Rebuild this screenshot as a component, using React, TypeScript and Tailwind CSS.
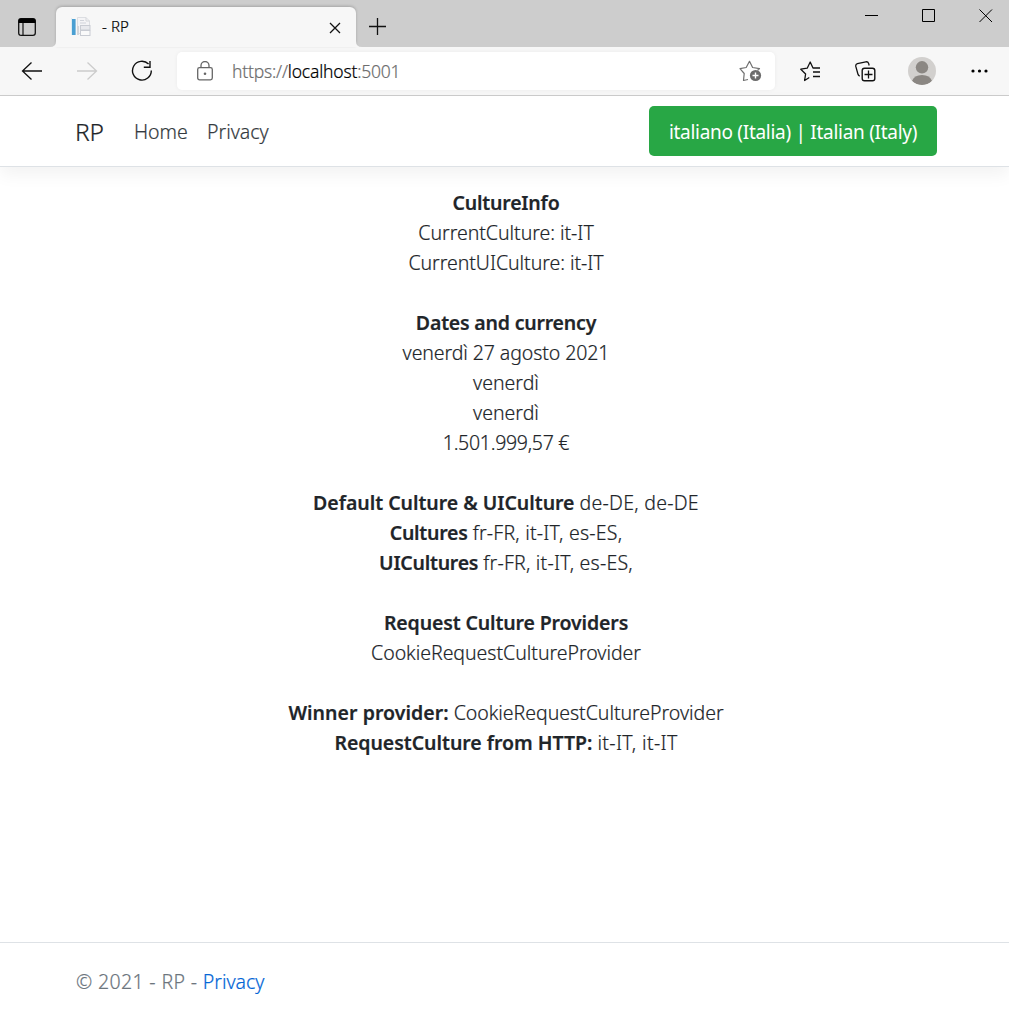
import type { ReactNode } from "react";

function TabStrip() {
  return (
    <div className="flex h-[47px] bg-[#cdcdcd]">
      <div className="flex w-[56px] items-center pt-[7px] pl-[18px]">
        <svg width="18" height="18" viewBox="0 0 18 18" fill="none">
          <rect x="0.7" y="0.7" width="16.6" height="16.6" rx="2.4" stroke="#111" strokeWidth="1.3" />
          <path d="M0.5 5V3Q0.5 0.5 3 0.5H15Q17.5 0.5 17.5 3V5Z" fill="#000" />
          <path d="M5 5V17" stroke="#111" strokeWidth="1.2" />
        </svg>
      </div>
      <div className="relative mt-[7px] flex h-10 w-[300px] items-center rounded-t-[6px] bg-[#f7f7f7] pl-[15px] shadow-[0_-1px_3px_rgba(0,0,0,0.2)]">
        <svg className="absolute bottom-0 -left-1.5" width="6" height="6">
          <path d="M6 0V6H0Q6 6 6 0Z" fill="#f7f7f7" />
        </svg>
        <svg className="absolute -right-1.5 bottom-0" width="6" height="6">
          <path d="M0 0V6H6Q0 6 0 0Z" fill="#f7f7f7" />
        </svg>
        <svg width="20" height="20" viewBox="0 0 20 20" fill="none">
          <path d="M0.5 1V18" stroke="#dcecf3" />
          <rect x="1" y="2" width="3.6" height="16" fill="#4a9fd2" />
          <path d="M6.5 0.5H15L18.5 4V16.5H6.5Z" fill="#f4f4f6" stroke="#dcdee2" />
          <path d="M15 0.5V4H18.5" stroke="#d4d6da" />
          <path d="M9 3.5H13M9 6H15" stroke="#d0d3da" />
          <rect x="9.5" y="8.5" width="9.5" height="4.5" fill="#e8e9ed" stroke="#c9ccd3" />
          <rect x="9.5" y="13.5" width="9.5" height="5" fill="#fafafa" stroke="#c9ccd3" />
          <path d="M7 9V18" stroke="#d4d6da" strokeWidth="2" />
        </svg>
        <span className="ml-[11px] pb-0.5 text-[15px] leading-5 tracking-[0.1px] text-black">- RP</span>
        <svg className="mt-px mr-[15px] ml-auto" width="12" height="12" viewBox="0 0 12 12">
          <path d="M1 1L11 11M11 1L1 11" stroke="#111" strokeWidth="1.3" />
        </svg>
      </div>
      <svg className="mt-[18px] ml-[13px]" width="18" height="18" viewBox="0 0 18 18">
        <path d="M8.5 0V17M0 8.5H17" stroke="#111" strokeWidth="1.3" />
      </svg>
      <div className="mr-4 ml-auto flex gap-[43px] pt-[9px]">
        <svg width="14" height="14" viewBox="0 0 14 14">
          <path d="M0 6.5H13" stroke="#000" />
        </svg>
        <svg width="14" height="14" viewBox="0 0 14 14" fill="none">
          <path d="M0.5 0.5H12.5V12.5H0.5Z" stroke="#000" />
        </svg>
        <svg width="14" height="14" viewBox="0 0 14 14">
          <path d="M0.5 0.5L13 13M13 0.5L0.5 13" stroke="#000" />
        </svg>
      </div>
    </div>
  );
}

function Toolbar() {
  return (
    <div className="flex h-[49px] items-center border-b border-[#cccccc] bg-[#f7f7f7]">
      <svg className="ml-[21px]" width="21" height="18" viewBox="0 0 21 18" fill="none">
        <path d="M10.5 0.5L1.5 9L10.5 17.5M1.5 9H21" stroke="#111" strokeWidth="1.3" />
      </svg>
      <svg className="ml-[35px]" width="21" height="18" viewBox="0 0 21 18" fill="none">
        <path d="M10.5 0.5L19.5 9L10.5 17.5M19.5 9H0" stroke="#cccccc" strokeWidth="1.3" />
      </svg>
      <svg className="ml-[33px]" width="22" height="22" viewBox="0 0 22 22" fill="none">
        <path d="M17.6 4.1A9.4 9.4 0 1 0 20.3 10.5M19 1V7.2H12.8" stroke="#111" strokeWidth="1.4" />
      </svg>
      <div className="ml-6 flex h-[38px] w-[598px] items-center rounded-[5px] bg-white pl-5 shadow-[0_0_4px_rgba(0,0,0,0.05)]">
        <svg className="mb-px" width="16" height="20" viewBox="0 0 16 20" fill="none">
          <rect x="0.7" y="6.7" width="14.6" height="12.2" rx="1.8" stroke="#666" strokeWidth="1.3" />
          <path d="M4 6.5V4.5A4 4 0 0 1 12 4.5V6.5" stroke="#666" strokeWidth="1.3" />
          <circle cx="8" cy="12.7" r="1.3" fill="#666" />
        </svg>
        <span className="ml-[19px] text-[17.5px] font-light tracking-[-0.2px] whitespace-nowrap text-[#6d6d6d]">
          https://<span className="text-black">localhost</span>:5001
        </span>
        <svg className="mr-[13px] ml-auto" width="23" height="22" viewBox="0 0 23 22" fill="none">
          <path
            d="M9 19.5L4.5 20.5L5.2 13.5L1 8.7L7.2 7.5L10.5 1.3L13.6 7.5L20.5 8.6L18.5 10.5"
            stroke="#707070"
            strokeWidth="1.2"
            strokeLinejoin="round"
          />
          <circle cx="16.5" cy="15.5" r="5.6" fill="#6b6b6b" />
          <path d="M16.5 12.5V18.5M13.5 15.5H19.5" stroke="#fff" strokeWidth="1.4" />
        </svg>
      </div>
      <svg className="ml-[25px]" width="21" height="21" viewBox="0 0 21 21" fill="none">
        <path
          d="M9.3 16.5L4.6 19.5L5.6 13L0.8 8.2L7.2 7.2L10.2 1L13 7H20"
          stroke="#111"
          strokeWidth="1.3"
          strokeLinejoin="round"
        />
        <path d="M13 11H20M13 15.5H20" stroke="#111" strokeWidth="1.3" />
      </svg>
      <svg className="ml-[34px]" width="21" height="21" viewBox="0 0 21 21" fill="none">
        <rect x="7.2" y="7.2" width="12.6" height="12.6" rx="2.3" stroke="#111" strokeWidth="1.4" />
        <path d="M13.5 9.5V17.5M9.5 13.5H17.5" stroke="#111" strokeWidth="1.3" />
        <path
          d="M4.7 15.2Q3.3 14.6 2.9 13L0.8 5.4Q0.4 3.3 2.4 2.7L10.8 0.8Q13 0.5 13.6 2.4L14.2 4.5"
          stroke="#111"
          strokeWidth="1.3"
        />
      </svg>
      <svg className="ml-8" width="28" height="28" viewBox="0 0 28 28">
        <defs>
          <clipPath id="avatar">
            <circle cx="14" cy="14" r="14" />
          </clipPath>
        </defs>
        <circle cx="14" cy="14" r="14" fill="#d2d0ce" />
        <circle cx="14" cy="10.3" r="6.2" fill="#8b8783" />
        <path d="M4 24Q6 18 14 18Q22 18 24 24Q20 28 14 28Q8 28 4 24Z" fill="#8b8783" clipPath="url(#avatar)" />
      </svg>
      <svg className="ml-[35px]" width="17" height="4" viewBox="0 0 17 4">
        <circle cx="2" cy="2" r="1.6" />
        <circle cx="8.5" cy="2" r="1.6" />
        <circle cx="15" cy="2" r="1.6" />
      </svg>
    </div>
  );
}

function Heading({ children, className }: { children: ReactNode; className: string }) {
  return <b className={`font-semibold ${className}`}>{children}</b>;
}

export default function App() {
  return (
    <div className="flex h-[1013px] w-[1009px] flex-col overflow-hidden bg-white font-['Noto_Sans',sans-serif] text-[19.5px] leading-[30px] font-light text-[#212529] [-webkit-text-stroke:0.2px]">
      <TabStrip />
      <Toolbar />
      <header className="flex h-[71px] shrink-0 items-center border-b border-[#dee2e6] pr-[72px] pl-[75px] shadow-[0_8px_16px_rgba(0,0,0,0.05)]">
        <a className="w-[59px] pt-0.5 text-[24.5px] tracking-[-0.2px]">RP</a>
        <a className="w-[73px] pt-0.5 text-[#343a40]">Home</a>
        <a className="pt-0.5 text-[#343a40]">Privacy</a>
        <button className="ml-auto h-[50px] w-[288px] rounded-[5px] bg-[#28a745] pt-0.5 text-[19px] font-normal tracking-[-0.29px] whitespace-nowrap text-white [-webkit-text-stroke:0px]">
          italiano (Italia) | Italian (Italy)
        </button>
      </header>
      <main className="flex-1 pt-[21px] pl-[3px] text-center whitespace-nowrap">
        <div className="pb-[30px]">
          <Heading className="tracking-[-0.2px]">CultureInfo</Heading>
          <p className="tracking-[-0.03px]">CurrentCulture: it-IT</p>
          <p className="tracking-[-0.05px]">CurrentUICulture: it-IT</p>
        </div>
        <div className="pb-[30px]">
          <Heading className="tracking-[-0.2px]">Dates and currency</Heading>
          <p className="tracking-[-0.09px]">venerdì 27 agosto 2021</p>
          <p>venerdì</p>
          <p>venerdì</p>
          <p className="tracking-[-0.28px]">1.501.999,57 €</p>
        </div>
        <div className="pb-[30px]">
          <p>
            <Heading className="-tracking-[0.03px]">Default Culture &amp; UICulture</Heading>{" "}
            <span className="tracking-[0.26px]">de-DE, de-DE</span>
          </p>
          <p>
            <Heading className="tracking-[-0.25px]">Cultures</Heading>{" "}
            <span className="tracking-[0.22px]">fr-FR, it-IT, es-ES,</span>
          </p>
          <p>
            <Heading className="tracking-[-0.25px]">UICultures</Heading>{" "}
            <span className="tracking-[0.22px]">fr-FR, it-IT, es-ES,</span>
          </p>
        </div>
        <div className="pb-[30px]">
          <Heading className="tracking-[-0.13px]">Request Culture Providers</Heading>
          <p className="tracking-[-0.03px]">CookieRequestCultureProvider</p>
        </div>
        <p>
          <Heading className="tracking-[0.04px]">Winner provider:</Heading>{" "}
          <span className="tracking-[-0.03px]">CookieRequestCultureProvider</span>
        </p>
        <p>
          <Heading className="tracking-[-0.03px]">RequestCulture from HTTP:</Heading>{" "}
          <span className="tracking-[0.35px]">it-IT, it-IT</span>
        </p>
      </main>
      <footer className="h-[71px] border-t border-[#dee2e6] pt-6 pl-[76px] text-[#6c757d]">
        <span className="tracking-[0.35px]">© 2021 - RP - </span>
        <a className="text-[#0366d6]">Privacy</a>
      </footer>
    </div>
  );
}
